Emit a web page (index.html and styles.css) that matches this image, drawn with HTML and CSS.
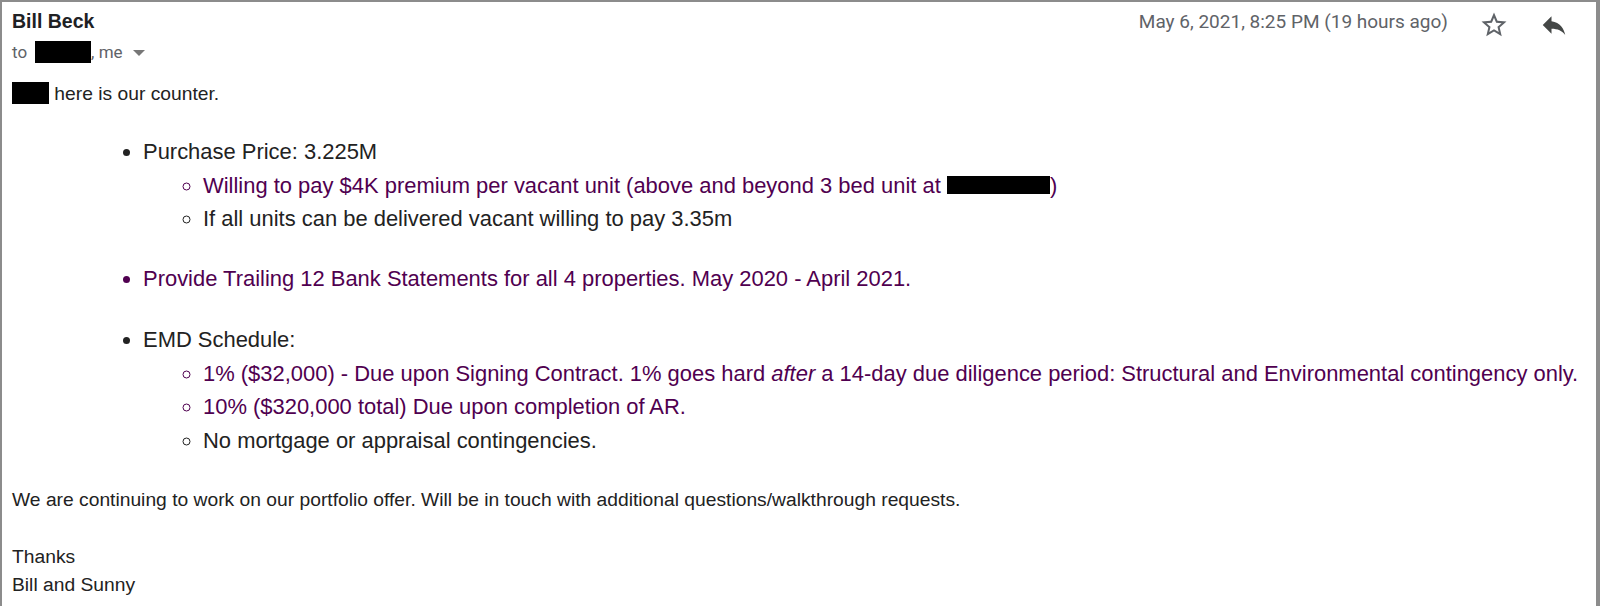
FILE: index.html
```html
<!DOCTYPE html>
<html>
<head>
<meta charset="utf-8">
<link rel="stylesheet" href="styles.css">
</head>
<body>
<div class="frame">
  <div class="header">
    <div class="from">
      <div class="name">Bill Beck</div>
      <div class="to">to <span class="redact r-to"></span>, me <span class="caret"></span></div>
    </div>
    <div class="meta">
      <span class="date">May 6, 2021, 8:25 PM (19 hours ago)</span>
      <svg class="star" viewBox="0 0 24 24" width="30" height="30"><path fill="#5f6368" d="M22 9.24l-7.19-.62L12 2 9.19 8.63 2 9.24l5.46 4.73L5.82 21 12 17.27 18.18 21l-1.63-7.03L22 9.24zM12 15.4l-3.76 2.27 1-4.28-3.32-2.88 4.38-.38L12 6.1l1.71 4.04 4.38.38-3.32 2.88 1 4.28L12 15.4z"/></svg>
      <svg class="reply" viewBox="0 0 24 24" width="30" height="30"><path fill="#444746" d="M10 9V5l-7 7 7 7v-4.1c5 0 8.5 1.6 11 5.1-1-5-4-10-11-11z"/></svg>
    </div>
  </div>
  <div class="body">
    <p class="line"><span class="redact r-name"></span> here is our counter.</p>
    <ul class="l1">
      <li>Purchase Price: 3.225M
        <ul class="l2">
          <li class="purple">Willing to pay $4K premium per vacant unit (above and beyond 3 bed unit at <span class="redact r-addr"></span>)</li>
          <li>If all units can be delivered vacant willing to pay 3.35m</li>
        </ul>
      </li>
    </ul>
    <ul class="l1 mid">
      <li class="purple">Provide Trailing 12 Bank Statements for all 4 properties. May 2020 - April 2021.</li>
    </ul>
    <ul class="l1 last">
      <li>EMD Schedule:
        <ul class="l2">
          <li class="purple">1% ($32,000) - Due upon Signing Contract. 1% goes hard <em>after</em> a 14-day due diligence period: Structural and Environmental contingency only.</li>
          <li class="purple">10% ($320,000 total) Due upon completion of AR.</li>
          <li>No mortgage or appraisal contingencies.</li>
        </ul>
      </li>
    </ul>
    <p class="line after-list">We are continuing to work on our portfolio offer. Will be in touch with additional questions/walkthrough requests.</p>
    <p class="line gap">Thanks</p>
    <p class="line">Bill and Sunny</p>
  </div>
</div>
</body>
</html>
```
FILE: styles.css
```css
html, body {
  margin: 0;
  padding: 0;
  background: #ffffff;
}
.frame {
  box-sizing: border-box;
  width: 1600px;
  height: 606px;
  border-style: solid;
  border-color: #8c8c8c;
  border-width: 2px 4px 0 2px;
  background: #fff;
  overflow: hidden;
}
.header {
  display: flex;
  justify-content: space-between;
  align-items: flex-start;
  padding: 8px 0 0 10px;
}
.name {
  font-family: "Liberation Sans", Arial, sans-serif;
  font-weight: bold;
  font-size: 19.5px;
  line-height: 23px;
  color: #202124;
}
.to {
  margin-top: 7px;
  font-family: Roboto, "Liberation Sans", sans-serif;
  font-size: 17px;
  line-height: 24px;
  color: #5f6368;
  display: flex;
  align-items: center;
}
.to .r-to {
  margin-left: 8px;
}
.caret {
  display: inline-block;
  width: 0;
  height: 0;
  border-left: 6px solid transparent;
  border-right: 6px solid transparent;
  border-top: 6px solid #777;
  margin-left: 10px;
  margin-top: 1px;
}
.meta {
  display: flex;
  align-items: flex-start;
  margin-right: 27px;
}
.date {
  font-family: Roboto, "Liberation Sans", sans-serif;
  font-size: 19px;
  line-height: 24px;
  color: #5f6368;
  margin-right: 31px;
}
.star {
  margin-right: 30px;
}
.redact {
  display: inline-block;
  background: #000;
  vertical-align: middle;
}
.r-to {
  width: 56px;
  height: 22px;
}
.r-name {
  width: 37px;
  height: 22px;
  margin-top: -3px;
}
.r-addr {
  width: 103px;
  height: 18px;
  margin-top: -3px;
}
.body {
  padding: 16px 0 0 10px;
  font-family: "Liberation Sans", Arial, Helvetica, sans-serif;
  font-size: 19.25px;
  color: #222;
}
.line {
  margin: 0;
  line-height: 28px;
}
.gap {
  margin-top: 29px;
}
.after-list {
  margin-top: 29px;
}
ul {
  margin: 0;
}
ul.l1 {
  padding-left: 131px;
  margin-top: 27px;
  list-style-type: disc;
  font-size: 21.95px;
}
ul.l1.mid {
  margin-top: 26px;
}
ul.l1.last {
  margin-top: 28px;
}
ul.l2 {
  padding-left: 60px;
  margin-top: 0;
  list-style-type: circle;
}
li {
  line-height: 33.5px;
}
.purple {
  color: #500050;
}
```
